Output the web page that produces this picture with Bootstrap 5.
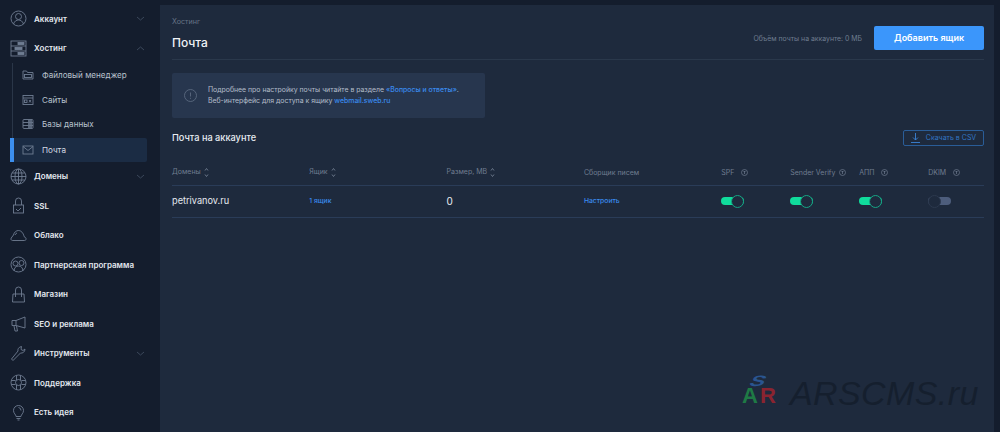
<!DOCTYPE html>
<html lang="ru">
<head>
  <meta charset="UTF-8">
  <meta name="viewport" content="width=device-width, initial-scale=1">
  <title>Почта - Хостинг</title>
  <link href="https://cdn.jsdelivr.net/npm/bootstrap@5.3.3/dist/css/bootstrap.min.css" rel="stylesheet">
  <style>
    html, body { height: 432px; overflow: hidden; }
    body { background: #141d2d; font-family: "Inter", "Liberation Sans", sans-serif; color: #e8edf3; }
    svg { display: block; fill: none; stroke: #6f7d92; stroke-width: .9; }
    .app-shell { height: 432px; padding: 5px 6px 0 0; }
    .side-menu { width: 160px; flex: none; margin-top: -5px; padding-top: 4px; }
    .side-item { height: 29.5px; padding-left: 10px; padding-right: 15px; font-size: 8px; font-weight: 600; color: #e3e8ef; }
    .side-ico { width: 17px; height: 17px; margin-right: 7px; flex: none; }
    .side-arrow { width: 9px; height: 5px; margin-left: auto; stroke: #3f4c60; }
    .side-sub { margin-left: 12px; margin-right: 13px; border-left: 1px solid #2a3648; height: 75px; }
    .sub-item { height: 24.6px; padding-left: 9px; font-size: 8.1px; font-weight: 400; color: #b9c2ce; }
    .sub-ico { width: 12px; height: 12px; margin-right: 8px; flex: none; }
    .sub-active { height: 24px; margin-left: 10px; margin-right: 13px; margin-bottom: -.5px; background: #1b2c44; border-left: 4px solid #3c8fef; padding-left: 8px; font-size: 8.1px; color: #d5dbe3; border-radius: 0 2px 2px 0; }
    .main-panel { background: #1e2a3d; padding: 0 10px 0 12px; }
    .page-head { height: 55px; border-bottom: 1px solid #2a384b; padding-top: 12px; }
    .crumb { font-size: 7.2px; color: #667386; line-height: 10px; }
    .page-title { font-size: 12px; font-weight: 500; line-height: 16px; margin: 8px 0 0; color: #f0f3f7; }
    .volume-note { font-size: 6.9px; color: #6f7d90; margin: 17px 12px 0 0; }
    .btn-add { width: 110px; height: 24px; padding: 0; margin-top: 9px; background: #3b96fb; border: 0; border-radius: 2px; color: #fff; font-size: 9px; font-weight: 600; }
    .note-box { width: 313px; height: 45px; margin-top: 13px; background: #27364e; border-radius: 2px; padding-left: 12px; font-size: 6.9px; line-height: 10.5px; color: #b4bdca; }
    .note-ico { width: 13px; height: 13px; margin-right: 11px; stroke: #5b6a80; flex: none; }
    .blue-link { color: #3a8bee; text-decoration: none; font-weight: 500; }
    .list-head { margin-top: 12px; height: 16px; }
    .list-title { font-size: 9.2px; font-weight: 500; margin: 0; color: #e8edf3; }
    .btn-csv { width: 81px; height: 16px; padding: 0; font-size: 7px; color: #3376c4; border: 1px solid #2a5d98; border-radius: 2px; background: transparent; }
    .btn-csv svg { width: 9px; height: 10px; stroke: #3a82d6; margin-right: 6px; }
    .mail-table { --bs-table-bg: transparent; --bs-table-color: #e8edf3; table-layout: fixed; width: 812px; margin: 9px 0 0; }
    .mail-table th { height: 30px; padding: 0 0 7px; vertical-align: bottom; line-height: 11px; font-size: 7px; font-weight: 400; color: #707d90; border-bottom: 1px solid #2a3c58; }
    .mail-table td { height: 32px; padding: 0; vertical-align: middle; font-size: 8px; border-bottom: 1px solid #2a3c58; }
    .mail-table .domain-cell { font-size: 9.2px; color: #e4e9ef; }
    .mail-table .num-cell { font-size: 10px; }
    .mail-table .link-cell { font-size: 6.8px; font-weight: 700; }
    .col-wide { width: 137.3px; }
    .col-narrow { width: 69px; }
    .col-last { width: 55.8px; }
    .sort-ico { display: inline-block; width: 5px; height: 11px; margin-left: 3px; vertical-align: middle; stroke: #707d90; }
    .help-ico { display: inline-block; width: 7px; height: 7px; margin-left: 4px; vertical-align: -1px; stroke: #707d90; stroke-width: .7; }
    .help-gap { margin-left: 7px; }
    .toggle-sw { display: block; position: relative; width: 23px; height: 8px; border-radius: 4px; background: #10dc9c; }
    .toggle-sw::after { content: ""; position: absolute; right: 0; top: -2.5px; width: 13px; height: 13px; border-radius: 50%; background: #1e2a3d; border: 1px solid #16a585; }
    .toggle-off { background: #4d5d7c; }
    .toggle-off::after { left: 0; right: auto; border-color: #2c394e; }
    .mark-wrap { position: absolute; left: 742px; top: 371px; pointer-events: none; }
    .mark-text { font-family: "Liberation Sans", sans-serif; font-style: italic; font-size: 34px; line-height: 44px; color: #151f2e; margin-left: 12px; letter-spacing: .4px; }
    .mark-cube { width: 36px; height: 38px; stroke: none; overflow: visible; }
    .mark-cube text { font-family: "Liberation Sans", sans-serif; font-weight: 700; stroke: none; }
  </style>
</head>
<body>
  <div class="app-shell d-flex">
    <nav class="side-menu">
      <div class="side-item d-flex align-items-center">
        <svg class="side-ico" viewBox="0 0 17 17"><circle cx="8.5" cy="8.5" r="7.5"/><circle cx="8.5" cy="6.5" r="3"/><path d="M3.5 14c1-3 3-4 5-4s4 1 5 4"/></svg>Аккаунт
        <svg class="side-arrow" viewBox="0 0 9 5"><path d="M1 1l3.5 3L8 1"/></svg>
      </div>
      <div class="side-item d-flex align-items-center">
        <svg class="side-ico" viewBox="0 0 17 17"><rect x="1" y="1" width="15" height="15"/><path d="M1 6h15M1 11h15"/><rect x="8" y="2.5" width="6" height="2" fill="#6f7d92"/><rect x="5" y="7.5" width="7" height="2" fill="#6f7d92"/><rect x="8" y="12.5" width="6" height="2" fill="#6f7d92"/></svg>Хостинг
        <svg class="side-arrow" viewBox="0 0 9 5"><path d="M1 4l3.5-3L8 4"/></svg>
      </div>
      <div class="side-sub">
        <div class="sub-item d-flex align-items-center">
          <svg class="sub-ico" viewBox="0 0 12 12"><path d="M1 10V2h3.5l1 1.5H11V10z"/><rect x="2.5" y="5.5" width="7" height="3"/></svg>Файловый менеджер
        </div>
        <div class="sub-item d-flex align-items-center">
          <svg class="sub-ico" viewBox="0 0 12 12"><rect x="1" y="1.5" width="10" height="9"/><path d="M1 4h10"/><rect x="2.5" y="6" width="2.5" height="2.5"/><path d="M7 6l2 2.5M9 6L7 8.5"/></svg>Сайты
        </div>
        <div class="sub-item d-flex align-items-center">
          <svg class="sub-ico" viewBox="0 0 12 12"><rect x="1" y="1.5" width="10" height="9" rx="1"/><path d="M1 4.5h10M1 7.5h10"/><path d="M6 3h4M6 6h4M6 9h4" stroke-width="1.4"/></svg>Базы данных
        </div>
      </div>
      <div class="sub-active d-flex align-items-center">
        <svg class="sub-ico" viewBox="0 0 12 12"><rect x="1" y="2" width="10" height="8"/><path d="M1 2.5l5 4 5-4"/></svg>Почта
      </div>
      <div class="side-item d-flex align-items-center">
        <svg class="side-ico" viewBox="0 0 17 17"><circle cx="8.5" cy="8.5" r="7.5"/><ellipse cx="8.5" cy="8.5" rx="3.5" ry="7.5"/><path d="M8.5 1v15M1 8.5h15M2 5h13M2 12h13"/></svg>Домены
        <svg class="side-arrow" viewBox="0 0 9 5"><path d="M1 1l3.5 3L8 1"/></svg>
      </div>
      <div class="side-item d-flex align-items-center">
        <svg class="side-ico" viewBox="0 0 17 17"><rect x="3.500" y="8" width="10" height="8"/><path d="M5.500 8V4a3 3 0 0 1 6 0v4"/><path d="M6 12l2 2 3-3"/></svg>SSL
      </div>
      <div class="side-item d-flex align-items-center">
        <svg class="side-ico" viewBox="0 0 17 17"><path d="M2.500 13.500h12a1.500 1.500 0 0 0 1.500-2c-.3-1-1-1.500-2-2C13.500 6 11 3.500 8.500 3.500S4 5.500 3.500 8L1.200 11c-.6 1.300 0 2.500 1.300 2.500z"/><path d="M5 8a3.500 3.500 0 0 1 2-2"/></svg>Облако
      </div>
      <div class="side-item d-flex align-items-center">
        <svg class="side-ico" viewBox="0 0 17 17"><circle cx="8.500" cy="8.500" r="7.500"/><circle cx="5.500" cy="7.500" r="2.500"/><circle cx="11.500" cy="7" r="2.500"/><path d="M4 15c0-3 2-5 4.500-5s4.500 2 4.500 5"/></svg>Партнерская программа
      </div>
      <div class="side-item d-flex align-items-center">
        <svg class="side-ico" viewBox="0 0 17 17"><path d="M3 8h11l.5 8h-12z"/><path d="M5.500 11V4a3 3 0 0 1 6 0v7"/></svg>Магазин
      </div>
      <div class="side-item d-flex align-items-center">
        <svg class="side-ico" viewBox="0 0 17 17"><path d="M15 2v11L6 10.500H2V5.500h4z"/><path d="M6 5.500v5M4 11l1 5h2.500L6.500 11"/></svg>SEO и реклама
      </div>
      <div class="side-item d-flex align-items-center">
        <svg class="side-ico" viewBox="0 0 17 17"><path d="M1.500 14l1.500 1.500 7.500-7.500c2 .5 4.500-1 4.500-4l-2 1.500-2-1 .5-3C8.500 2 7.500 4.500 8 6z"/></svg>Инструменты
        <svg class="side-arrow" viewBox="0 0 9 5"><path d="M1 1l3.500 3L8 1"/></svg>
      </div>
      <div class="side-item d-flex align-items-center">
        <svg class="side-ico" viewBox="0 0 17 17"><circle cx="8.500" cy="8.500" r="7.500"/><circle cx="8.500" cy="8.500" r="3"/><path d="M6.500 1.500v4.500M10.500 1.500v4.500M6.500 11v4.500M10.500 11v4.500M1.500 6.500h4M1.500 10.500h4M11.500 6.500h4M11.500 10.500h4"/></svg>Поддержка
      </div>
      <div class="side-item d-flex align-items-center">
        <svg class="side-ico" viewBox="0 0 17 17"><path d="M6 12.500c0-2-2.500-3-2.500-6a5 5 0 0 1 10 0c0 3-2.500 4-2.500 6z"/><path d="M6.500 14.500h4M7.500 16h2M8.500 3.500a3 3 0 0 1 2.500 3"/></svg>Есть идея
      </div>
    </nav>

    <main class="main-panel flex-grow-1">
      <div class="page-head d-flex justify-content-between">
        <div>
          <div class="crumb">Хостинг</div>
          <h1 class="page-title">Почта</h1>
        </div>
        <div class="d-flex align-items-start">
          <span class="volume-note">Объём почты на аккаунте: 0 МБ</span>
          <button class="btn btn-add">Добавить ящик</button>
        </div>
      </div>

      <div class="note-box d-flex align-items-center">
        <svg class="note-ico" viewBox="0 0 13 13"><circle cx="6.500" cy="6.500" r="6"/><path d="M6.500 3.500v4M6.500 8.800v1"/></svg>
        <div>Подробнее про настройку почты читайте в разделе <a class="blue-link" href="#">«Вопросы и ответы»</a>.<br>Веб-интерфейс для доступа к ящику <a class="blue-link" href="#">webmail.sweb.ru</a></div>
      </div>

      <div class="list-head d-flex justify-content-between align-items-center">
        <h2 class="list-title">Почта на аккаунте</h2>
        <button class="btn btn-csv d-flex align-items-center justify-content-center">
          <svg viewBox="0 0 9 10"><path d="M4.500 0v7M2 4.500l2.500 2.500L7 4.500M0 9.500h9"/></svg>Скачать в CSV
        </button>
      </div>

      <table class="table mail-table">
        <colgroup>
          <col class="col-wide"><col class="col-wide"><col class="col-wide"><col class="col-wide">
          <col class="col-narrow"><col class="col-narrow"><col class="col-narrow"><col class="col-last">
        </colgroup>
        <thead>
          <tr>
            <th>Домены<svg class="sort-ico" viewBox="0 0 5 11"><path d="M1 3.500l1.500-2 1.500 2M1 7.500l1.500 2 1.500-2"/></svg></th>
            <th>Ящик<svg class="sort-ico" viewBox="0 0 5 11"><path d="M1 3.500l1.500-2 1.500 2M1 7.500l1.500 2 1.500-2"/></svg></th>
            <th>Размер, МВ<svg class="sort-ico" viewBox="0 0 5 11"><path d="M1 3.500l1.500-2 1.500 2M1 7.500l1.500 2 1.500-2"/></svg></th>
            <th>Сборщик писем</th>
            <th>SPF<svg class="help-ico help-gap" viewBox="0 0 7 7"><circle cx="3.500" cy="3.500" r="3"/><path d="M3.500 2v3M2.500 3l1-1 1 1"/></svg></th>
            <th>Sender Verify<svg class="help-ico" viewBox="0 0 7 7"><circle cx="3.500" cy="3.500" r="3"/><path d="M3.500 2v3M2.500 3l1-1 1 1"/></svg></th>
            <th>АПП<svg class="help-ico help-gap" viewBox="0 0 7 7"><circle cx="3.500" cy="3.500" r="3"/><path d="M3.500 2v3M2.500 3l1-1 1 1"/></svg></th>
            <th>DKIM<svg class="help-ico help-gap" viewBox="0 0 7 7"><circle cx="3.500" cy="3.500" r="3"/><path d="M3.500 2v3M2.500 3l1-1 1 1"/></svg></th>
          </tr>
        </thead>
        <tbody>
          <tr>
            <td class="domain-cell">petrivanov.ru</td>
            <td class="link-cell"><a class="blue-link" href="#">1 ящик</a></td>
            <td class="num-cell">0</td>
            <td class="link-cell"><a class="blue-link" href="#">Настроить</a></td>
            <td><span class="toggle-sw"></span></td>
            <td><span class="toggle-sw"></span></td>
            <td><span class="toggle-sw"></span></td>
            <td><span class="toggle-sw toggle-off"></span></td>
          </tr>
        </tbody>
      </table>
    </main>
  </div>

  <div class="mark-wrap d-flex align-items-center">
    <svg class="mark-cube" viewBox="0 0 36 38">
      <text font-size="15" fill="#2a5590" transform="translate(6 12) scale(1.5 1) skewX(-20)">S</text>
      <text x="0" y="29" font-size="22" fill="#1f7a45">A</text>
      <text x="18" y="29" font-size="22" fill="#8a2430">R</text>
    </svg>
    <span class="mark-text">ARSCMS.ru</span>
  </div>
</body>
</html>
